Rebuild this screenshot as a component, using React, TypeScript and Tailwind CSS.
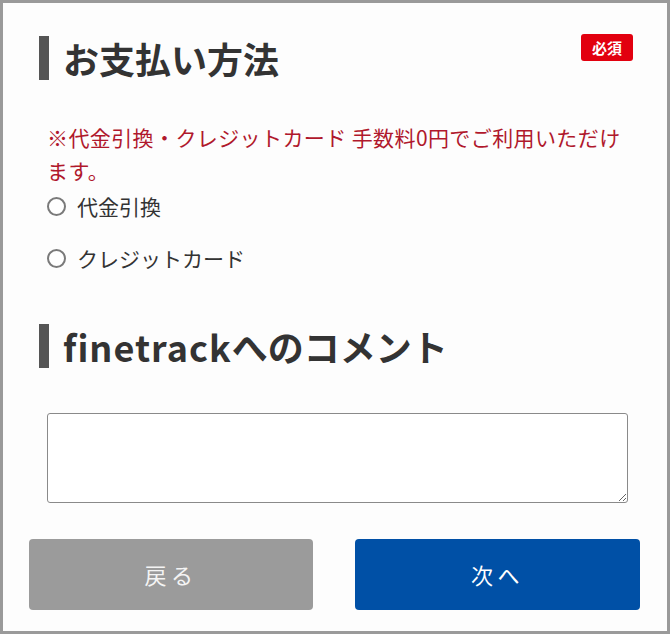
import React from "react";

function Radio({ label }: { label: string }) {
  return (
    <label className="flex h-[30px] items-center">
      <span className="box-border block h-[19px] w-[19px] rounded-full border-2 border-[#7a7a7a] bg-white" />
      <span className="ml-[11px] text-[21px] leading-[30px] text-[#333]">{label}</span>
    </label>
  );
}

function Heading({ children }: { children: React.ReactNode }) {
  return (
    <div className="flex h-[44px] items-center">
      <span className="block h-[44px] w-[10px] bg-[#555]" />
      <h2 className="ml-[14px] text-[36px] font-bold leading-[44px] text-[#333]">{children}</h2>
    </div>
  );
}

export default function App() {
  return (
    <div className="box-border flex h-[634px] w-[670px] flex-col border-[3px] border-[#9a9a9a] bg-[#fdfdfd] font-['Noto_Sans_CJK_JP','Noto_Sans',sans-serif]">
      <section className="pl-[36px] pr-[34px] pt-[31px]">
        <div className="flex items-start justify-between">
          <div className="mt-[2px]">
            <Heading>お支払い方法</Heading>
          </div>
          <span className="flex h-[27px] w-[52px] items-center justify-center rounded-[3px] bg-[#e2000f] text-[15px] font-bold leading-none text-white">
            必須
          </span>
        </div>
        <p className="ml-[8px] mt-[41px] w-[581px] text-[21px] leading-[33px] tracking-[0.4px] text-[#b0182c]">
          ※代金引換・クレジットカード 手数料0円でご利用いただけます。
        </p>
        <div className="ml-[8px] mt-[4px] flex flex-col gap-[22px]">
          <Radio label="代金引換" />
          <Radio label="クレジットカード" />
        </div>
        <div className="mt-[51px]">
          <Heading>
            <span className="tracking-[1px]">finetrack</span>へのコメント
          </Heading>
        </div>
        <textarea className="ml-[8px] mt-[45px] box-border block h-[90px] w-[581px] rounded-[3px] border border-[#8a8a8a] bg-white" />
      </section>
      <div className="mt-[36px] flex gap-[42px] pl-[26px]">
        <button className="flex h-[71px] w-[284px] items-center justify-center rounded-[4px] bg-[#9b9b9b] text-[22px] tracking-[0.2em] text-[#f4f4f4]">
          戻る
        </button>
        <button className="flex h-[71px] w-[285px] items-center justify-center rounded-[4px] bg-[#0050a6] text-[22px] tracking-[0.2em] text-white">
          次へ
        </button>
      </div>
    </div>
  );
}
